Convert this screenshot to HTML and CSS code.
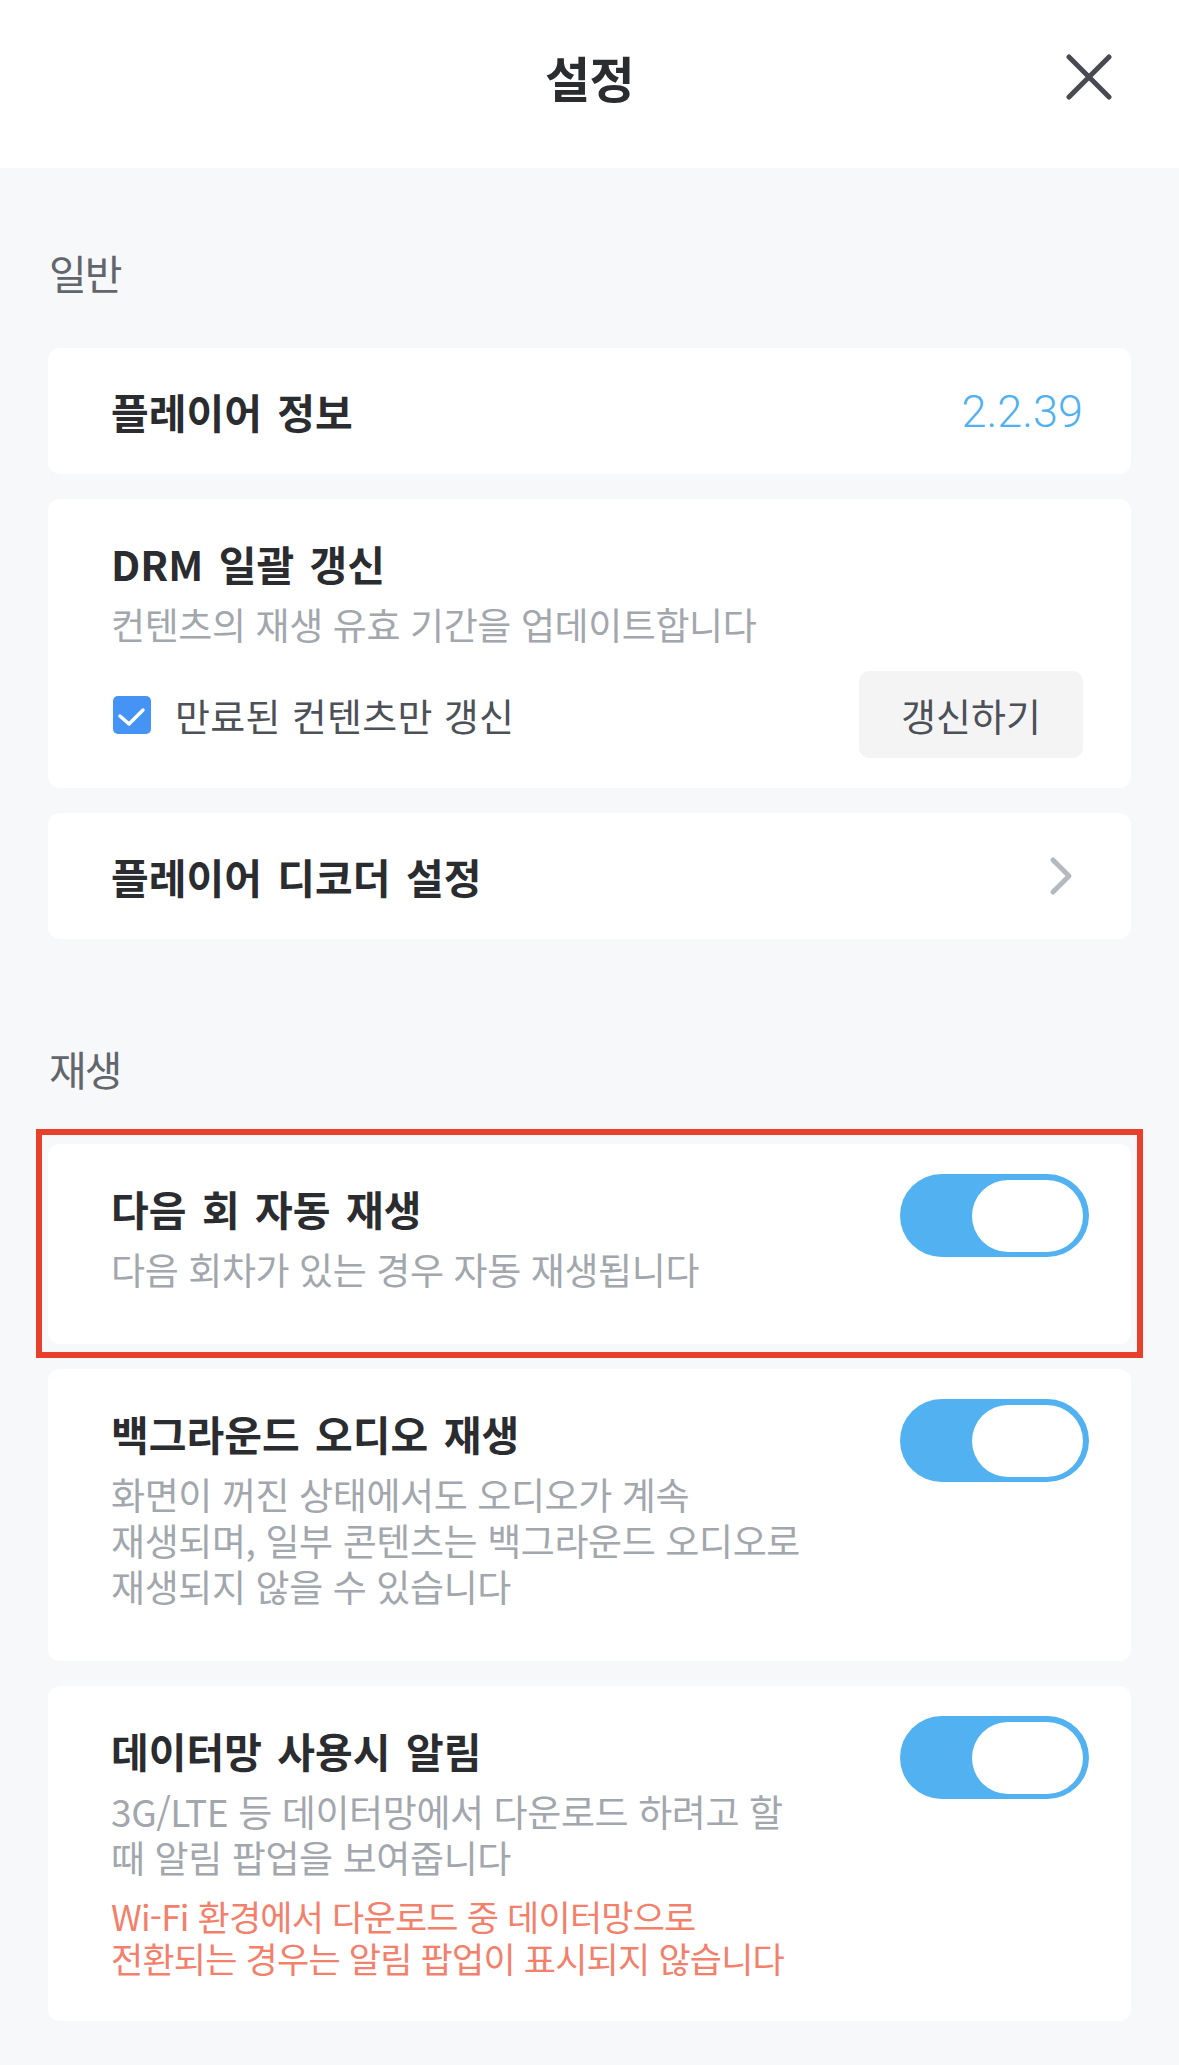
FILE: index.html
```html
<!doctype html>
<html lang="ko">
	<head>
		<meta charset="utf-8">
		<title>설정</title>
		<link rel="stylesheet" href="styles.css">
	</head>
	<body>
		<header class="topbar">
			<span></span>
			<h1 class="topbar-title">설정</h1>
			<button class="close-btn" type="button" aria-label="닫기">
				<svg width="46" height="46" viewBox="0 0 46 46">
					<path d="M3 3 L43 43 M43 3 L3 43" stroke="#474a50" stroke-width="5" stroke-linecap="round" fill="none"/>
				</svg>
			</button>
		</header>

		<main class="settings">
			<section class="group">
				<h2 class="group-label">일반</h2>

				<div class="card card-line">
					<span class="item-title">플레이어 정보</span>
					<span class="version">2.2.39</span>
				</div>

				<div class="card card-drm">
					<div class="item-text">
						<div class="item-title">DRM 일괄 갱신</div>
						<div class="item-desc">컨텐츠의 재생 유효 기간을 업데이트합니다</div>
					</div>
					<div class="drm-row">
						<label class="check">
							<svg width="38" height="38" viewBox="0 0 38 38">
								<rect x="0" y="0" width="38" height="38" rx="5" fill="#4593f5"/>
								<path d="M7 20 L16 28 L30 14" stroke="#fff" stroke-width="3.5" stroke-linecap="round" stroke-linejoin="round" fill="none"/>
							</svg>
							<span>만료된 컨텐츠만 갱신</span>
						</label>
						<button class="btn-renew" type="button">갱신하기</button>
					</div>
				</div>

				<div class="card card-line">
					<span class="item-title">플레이어 디코더 설정</span>
					<svg class="chevron" width="24" height="40" viewBox="0 0 24 40">
						<path d="M4 4 L20 20 L4 36" stroke="#b4b9c0" stroke-width="5" stroke-linecap="round" stroke-linejoin="round" fill="none"/>
					</svg>
				</div>
			</section>

			<section class="group">
				<h2 class="group-label">재생</h2>

				<div class="card card-toggle highlighted">
					<div class="item-text">
						<div class="item-title">다음 회 자동 재생</div>
						<div class="item-desc">다음 회차가 있는 경우 자동 재생됩니다</div>
					</div>
					<span class="toggle on"><span class="knob"></span></span>
				</div>

				<div class="card card-toggle">
					<div class="item-text">
						<div class="item-title">백그라운드 오디오 재생</div>
						<div class="item-desc">화면이 꺼진 상태에서도 오디오가 계속<br>재생되며, 일부 콘텐츠는 백그라운드 오디오로<br>재생되지 않을 수 있습니다</div>
					</div>
					<span class="toggle on"><span class="knob"></span></span>
				</div>

				<div class="card card-toggle card-data">
					<div class="item-text">
						<div class="item-title">데이터망 사용시 알림</div>
						<div class="item-desc">3G/LTE 등 데이터망에서 다운로드 하려고 할<br>때 알림 팝업을 보여줍니다</div>
						<div class="item-warn">Wi-Fi 환경에서 다운로드 중 데이터망으로<br>전환되는 경우는 알림 팝업이 표시되지 않습니다</div>
					</div>
					<span class="toggle on"><span class="knob"></span></span>
				</div>
			</section>
		</main>
	</body>
</html>
```

FILE: styles.css
```css
body {
	margin: 0;
	background-color: #f7f8fa;
	font-family: "Noto Sans CJK KR", "Noto Sans", sans-serif;
	color: #2a2c30;
}

.topbar {
	display: grid;
	grid-template-columns: 1fr auto 1fr;
	align-items: center;
	height: 168px;
	box-sizing: border-box;
	padding: 46px 67px 60px 67px;
	background-color: #fff;
}

.topbar-title {
	margin: 0;
	font-size: 49px;
	line-height: 62px;
	font-weight: 700;
	letter-spacing: -0.5px;
	color: #2a2c30;
}

.close-btn {
	justify-self: end;
	display: flex;
	padding: 0;
	border: 0;
	background: none;
}

.settings {
	padding: 74px 48px 47px 48px;
}

.group {
	display: flex;
	flex-direction: column;
	gap: 25px;
}

.group + .group {
	margin-top: 99px;
}

.group-label {
	margin: 0 0 21px 1px;
	font-size: 41px;
	line-height: 60px;
	font-weight: 400;
	letter-spacing: -2px;
	color: #62666c;
}

.card {
	position: relative;
	background-color: #fff;
	border-radius: 12px;
}

.card-line {
	display: flex;
	align-items: center;
	justify-content: space-between;
	height: 126px;
	padding: 0 48px 0 63px;
}

.item-title {
	font-size: 41px;
	line-height: 60px;
	font-weight: 700;
	letter-spacing: 0;
	word-spacing: 4px;
	color: #2a2c30;
}

.item-desc {
	margin-top: 8px;
	font-size: 37px;
	line-height: 46px;
	letter-spacing: -0.4px;
	color: #a2a6ad;
}

.item-warn {
	margin-top: 15px;
	font-size: 35px;
	line-height: 42px;
	letter-spacing: -0.8px;
	color: #f2806b;
}

.version {
	font-family: Roboto, "Noto Sans", sans-serif;
	font-weight: 300;
	font-size: 45px;
	color: #4fb1f0;
}

.chevron {
	margin-right: 10px;
}

.card-drm {
	padding: 34px 48px 30px 63px;
}

.drm-row {
	display: flex;
	align-items: center;
	justify-content: space-between;
	margin-top: 24px;
}

.check {
	display: flex;
	align-items: center;
	gap: 24px;
	font-size: 38px;
	letter-spacing: 0.3px;
	color: #4c5057;
	margin-left: 2px;
}

.btn-renew {
	width: 224px;
	height: 87px;
	border: 0;
	border-radius: 10px;
	background-color: #f4f4f5;
	font-family: "Noto Sans CJK KR", sans-serif;
	font-size: 38px;
	letter-spacing: 0;
	color: #4c5057;
}

.card-toggle {
	display: flex;
	justify-content: space-between;
	align-items: flex-start;
	padding: 30px 42px 52px 63px;
}

.card-toggle .item-text {
	padding-top: 4px;
}

.card-data {
	padding-bottom: 42px;
}

.toggle {
	display: flex;
	align-items: center;
	justify-content: flex-end;
	flex-shrink: 0;
	width: 189px;
	height: 83px;
	box-sizing: border-box;
	padding-right: 6px;
	border-radius: 42px;
	background-color: #52b2f1;
}

.knob {
	width: 111px;
	height: 72px;
	border-radius: 36px;
	background-color: #fff;
}

.highlighted::after {
	content: "";
	position: absolute;
	top: -15px;
	left: -12px;
	right: -12px;
	bottom: -14px;
	border: 6px solid #e8402a;
	pointer-events: none;
}
```
